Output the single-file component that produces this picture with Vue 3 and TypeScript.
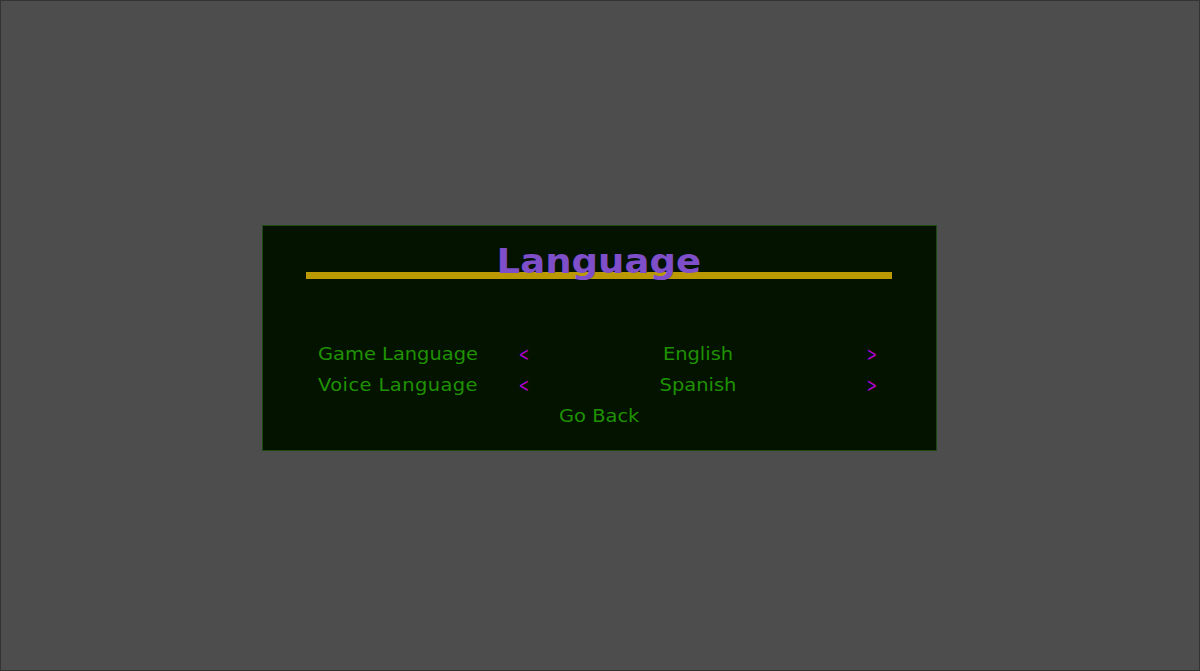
<script setup lang="ts">
interface Row {
  label: string
  value: string
}

const rows: Row[] = [
  { label: 'Game Language', value: 'English' },
  { label: 'Voice Language', value: 'Spanish' },
]
</script>

<template>
  <main class="screen">
    <section class="panel">
      <header class="head">
        <h1 class="title"><span class="title-text">Language</span></h1>
      </header>
      <div class="rows">
        <div v-for="row in rows" :key="row.label" class="row">
          <span class="label stretch">{{ row.label }}</span>
          <span class="arrow">&lt;</span>
          <span class="value stretch">{{ row.value }}</span>
          <span class="arrow">&gt;</span>
        </div>
        <div class="back"><span class="stretch">Go Back</span></div>
      </div>
    </section>
  </main>
</template>

<style>
html,
body {
  margin: 0;
  background: #4d4d4d;
}
</style>

<style scoped>
.screen {
  box-sizing: border-box;
  width: 1200px;
  height: 671px;
  padding-top: 224px;
  padding-left: 261px;
  background: #4d4d4d;
  border: 1px solid #333;
  font-family: "DejaVu Sans", sans-serif;
}
.panel {
  box-sizing: border-box;
  width: 675px;
  height: 226px;
  background: #031300;
  border: 1px solid #1c4a12;
}
.head {
  box-sizing: border-box;
  position: relative;
  height: 53px;
  margin: 0 44px 0 43px;
  border-bottom: 7px solid #bb9900;
}
.title {
  position: absolute;
  left: 0;
  right: 0;
  top: 12px;
  margin: 0;
  text-align: center;
  font-size: 34px;
  line-height: 46px;
  font-weight: 700;
  color: #7e4fc9;
}
.title-text {
  display: inline-block;
  transform: scaleX(1.09);
}
.rows {
  margin-top: 59px;
  padding: 0 44px 0 43px;
  color: #1f9200;
  font-size: 18px;
  font-weight: 400;
}
.row {
  display: grid;
  grid-template-columns: 184px 24px 20px 328px 20px;
  height: 31px;
  line-height: 31px;
  align-items: center;
  text-align: center;
}
.stretch {
  display: inline-block;
  white-space: nowrap;
  transform: scaleX(1.08);
}
.label {
  grid-column: 1;
}
.row:nth-child(2) .label {
  letter-spacing: 0.4px;
}
.arrow {
  display: inline-block;
  color: #b000d0;
  font-size: 18px;
  transform: scale(0.68, 1.1);
}
.row .arrow:nth-of-type(2) {
  grid-column: 3;
}
.value {
  grid-column: 4;
}
.row .arrow:nth-of-type(4) {
  grid-column: 5;
}
.back {
  height: 31px;
  line-height: 31px;
  text-align: center;
}
</style>
